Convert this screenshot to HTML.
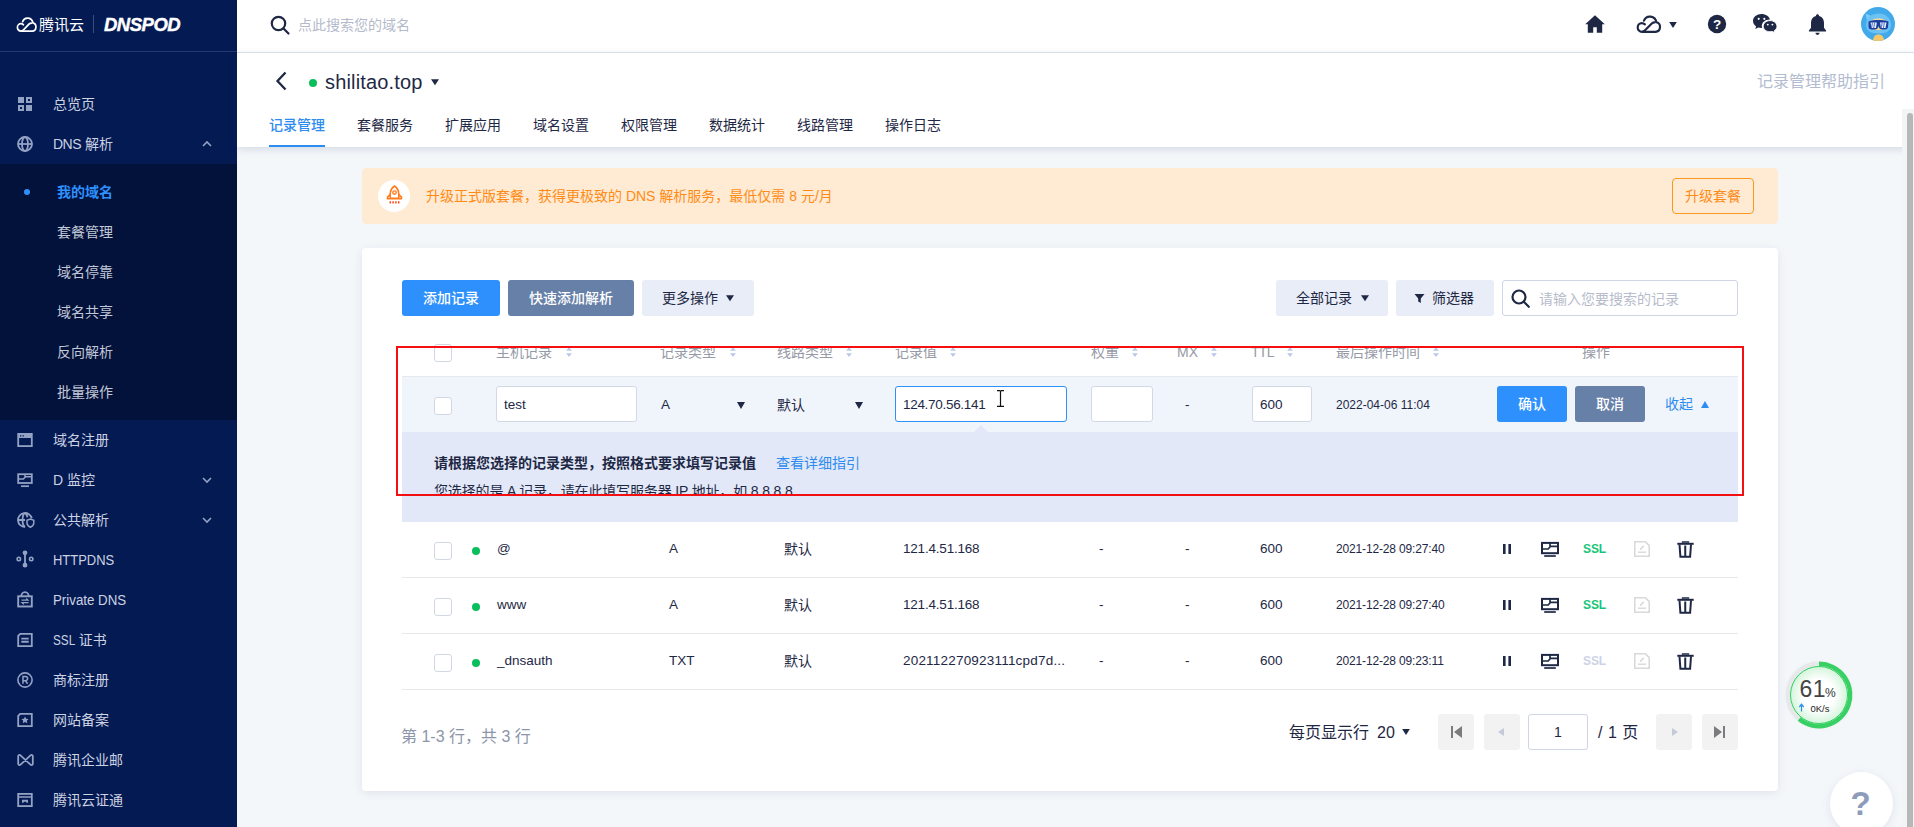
<!DOCTYPE html>
<html lang="zh-CN">
<head>
<meta charset="utf-8">
<title>DNSPod - shilitao.top 记录管理</title>
<style>
*{box-sizing:border-box;margin:0;padding:0}
html,body{width:1914px;height:827px;overflow:hidden}
body{position:relative;font-family:"Liberation Sans","Noto Sans CJK SC",sans-serif;font-size:14px;color:#1e2845;background:#f4f7fa}
.abs{position:absolute}
svg{display:block}
/* ---------- sidebar ---------- */
#side{position:absolute;left:0;top:0;width:237px;height:827px;background:#031a53;color:#c9cfe0}
#logo{position:absolute;left:0;top:0;width:237px;height:52px;border-bottom:1px solid #253a6e}
.mi{position:absolute;left:0;width:237px;height:40px;line-height:40px;padding-left:53px;font-size:14px;color:#cdd2e2;white-space:nowrap}
.mi svg{position:absolute;left:17px;top:12px}
.mi .chev{left:201px;top:14px}
#sub{position:absolute;left:0;top:164px;width:237px;height:256px;background:#02123b}
.si{position:absolute;left:57px;height:40px;line-height:40px;font-size:14px;color:#c3c8d8;white-space:nowrap}
/* ---------- topbar ---------- */
#top{position:absolute;left:237px;top:0;width:1677px;height:53px;background:#fff;border-bottom:1px solid #e1e4ed}
#head{position:absolute;left:237px;top:53px;width:1677px;height:94px;background:#fff;box-shadow:0 2px 8px rgba(40,60,110,.16)}
.tab{position:absolute;top:62px;height:20px;line-height:20px;font-size:14px;color:#1e2845;white-space:nowrap}
/* ---------- content ---------- */
#banner{position:absolute;left:362px;top:168px;width:1416px;height:56px;background:#ffebd4;border-radius:4px}
#card{position:absolute;left:362px;top:248px;width:1416px;height:543px;background:#fff;border-radius:4px;box-shadow:0 2px 10px rgba(40,60,110,.10)}
.btn{position:absolute;top:280px;height:36px;line-height:36px;border-radius:3px;font-size:14px;text-align:center;white-space:nowrap}
.th{position:absolute;top:342px;height:20px;line-height:20px;font-size:14px;color:#969aa6;white-space:nowrap}
.cb{position:absolute;width:18px;height:18px;border:1px solid #d3d7e3;border-radius:3px;background:#fff}
.inp{position:absolute;top:386px;height:36px;line-height:36px;border:1px solid #d3d8e6;border-radius:3px;background:#fff;font-size:13.500px;color:#1e2845;padding-left:7px}
.sx{display:inline-block;transform-origin:0 50%}
.td{position:absolute;height:20px;line-height:20px;font-size:13.500px;color:#1e2845;white-space:nowrap}
.row{position:absolute;left:402px;width:1336px;height:56px;border-bottom:1px solid #e4e7ef}
.pg{position:absolute;top:714px;width:36px;height:36px;background:#f2f2f3;border-radius:3px}
</style>
</head>
<body>
<!-- SIDEBAR -->
<div id="side">
  <div id="logo">
    <svg class="abs" style="left:16px;top:15px" width="22" height="18" preserveAspectRatio="none" viewBox="0 0 22 17" fill="none" stroke="#fff" stroke-width="1.700" stroke-linecap="round" stroke-linejoin="round"><path d="M5.600 15.200h10.600a3.900 3.900 0 0 0 .700-7.700A5.400 5.400 0 0 0 6.600 6.200"/><path d="M15.500 7.600c-.900 0-1.700.300-2.400.900L7.500 14c-.700.700-1.400 1.200-2.600 1.200a3.500 3.500 0 0 1 0-7c1 0 1.800.400 2.500 1"/></svg>
    <div class="abs" style="left:39px;top:13px;height:24px;line-height:24px;font-size:15px;color:#fff;letter-spacing:0">腾讯云</div>
    <div class="abs" style="left:93px;top:15px;width:1px;height:18px;background:#3c4d7c"></div>
    <div class="abs" style="left:104px;top:13px;height:24px;line-height:24px;font-size:18.500px;font-weight:bold;font-style:italic;color:#fff;letter-spacing:-.500px;-webkit-text-stroke:.400px #fff">DNSPOD</div>
  </div>
  <div class="mi" style="top:84px"><svg width="16" height="16" viewBox="0 0 16 16"><path fill="#94a2c4" d="M1 1h6v6H1zM9 1h6v6H9zm2 2v2h2V3zM1 9h6v6H1zm2 2v2h2v-2zM9 9h6v6H9z" fill-rule="evenodd"/></svg>总览页</div>
  <div class="mi" style="top:124px"><svg width="16" height="16" viewBox="0 0 16 16" fill="none" stroke="#94a2c4" stroke-width="1.800"><circle cx="8" cy="8" r="7"/><ellipse cx="8" cy="8" rx="3" ry="7"/><path d="M1 8h14"/></svg><span style="letter-spacing:-.500px">DNS</span> 解析<svg class="chev" width="12" height="12" viewBox="0 0 12 12" fill="none" stroke="#94a2c4" stroke-width="1.6"><path d="M2 8l4-4 4 4"/></svg></div>
  <div id="sub">
    <div class="abs" style="left:24px;top:25px;width:6px;height:6px;border-radius:50%;background:#2e90fd"></div>
    <div class="si" style="top:8px;color:#2e90fd;font-weight:bold">我的域名</div>
    <div class="si" style="top:48px">套餐管理</div>
    <div class="si" style="top:88px">域名停靠</div>
    <div class="si" style="top:128px">域名共享</div>
    <div class="si" style="top:168px">反向解析</div>
    <div class="si" style="top:208px">批量操作</div>
  </div>
  <div class="mi" style="top:420px"><svg width="16" height="16" viewBox="0 0 16 16" fill="none" stroke="#94a2c4" stroke-width="1.800"><rect x="1.200" y="1.900" width="13.600" height="12.200"/><path d="M1.200 4h13.600" stroke-width="4"/><path d="M3 3.200h1.300v1.300H3zM5.600 3.200h1.300v1.300H5.600z" fill="#031a53" stroke="none"/></svg>域名注册</div>
  <div class="mi" style="top:460px"><svg style="top:13px" width="16" height="16" viewBox="0 0 16 16" fill="none" stroke="#94a2c4" stroke-width="1.800"><rect x="1.200" y="1.200" width="13.600" height="8.800"/><path d="M1.200 6h5.200l2-2.300h6.400M8 1.200v3.500" stroke-width="1.500"/><path d="M4 13.200h8" stroke-width="1.700"/></svg>D 监控<svg class="chev" width="12" height="12" viewBox="0 0 12 12" fill="none" stroke="#94a2c4" stroke-width="1.6"><path d="M2 4l4 4 4-4"/></svg></div>
  <div class="mi" style="top:500px"><svg width="18" height="17" viewBox="0 0 18 17" fill="none" stroke="#94a2c4" stroke-width="1.800"><path d="M8 15A7 7 0 1 1 14.800 6.300M8 1C4.700 3 4.700 13 8 15M1 8h7M8 1c1.300.9 2.100 2.600 2.500 4.300"/><path d="M10 8.300l3.400-1.300 3.400 1.300v2.800c0 1.900-1.400 3.300-3.400 4.100-2-.8-3.400-2.200-3.400-4.100z" stroke-width="1.500"/></svg>公共解析<svg class="chev" width="12" height="12" viewBox="0 0 12 12" fill="none" stroke="#94a2c4" stroke-width="1.6"><path d="M2 4l4 4 4-4"/></svg></div>
  <div class="mi" style="top:540px"><svg style="left:16px;top:10px" width="18" height="18" viewBox="0 0 18 18" fill="none" stroke="#94a2c4" stroke-width="1.600"><path d="M9 3v12" stroke-width="1.800"/><circle cx="9" cy="2.800" r="1.600" fill="#94a2c4"/><circle cx="9" cy="15.200" r="1.600" fill="#94a2c4"/><circle cx="2.800" cy="9" r="1.700"/><circle cx="15.200" cy="9" r="1.700"/></svg><span class="sx" style="transform:scaleX(.925)">HTTPDNS</span></div>
  <div class="mi" style="top:580px"><svg style="top:10px" width="16" height="18" viewBox="0 0 16 18" fill="none" stroke="#94a2c4" stroke-width="1.900"><rect x="1.200" y="6.300" width="13.600" height="10.200"/><path d="M4.300 6.300a3.700 4.200 0 0 1 7.400 0"/><path d="M4.500 10.200h6.500l-1.800-1.700M11.500 12.700H5l1.800 1.700" stroke-width="1.200"/></svg><span class="sx" style="transform:scaleX(.950)">Private DNS</span></div>
  <div class="mi" style="top:620px"><svg width="16" height="16" viewBox="0 0 16 16" fill="none" stroke="#94a2c4" stroke-width="1.800"><path d="M3.200 1.900h11.600v12.200H1.200V3.900z"/><path d="M4.300 6.600h7.400M4.300 9.800h7.400" stroke-width="1.900"/></svg><span class="sx" style="transform:scaleX(.840);margin-right:-4.500px">SSL</span> 证书</div>
  <div class="mi" style="top:660px"><svg width="16" height="16" viewBox="0 0 16 16" fill="none" stroke="#94a2c4" stroke-width="1.600"><circle cx="8" cy="8" r="7.100"/><path d="M6 11.700V4.500h2.500a2.100 2.100 0 0 1 0 4.200H6M8.500 8.700l2.100 3" stroke-width="1.500"/></svg>商标注册</div>
  <div class="mi" style="top:700px"><svg width="16" height="16" viewBox="0 0 16 16" fill="none" stroke="#94a2c4" stroke-width="1.800"><path d="M3.200 1.900h11.600v12.200H1.200V3.900z"/><path d="M8 4.400l1.100 2.300 2.500.3-1.800 1.700.5 2.500L8 10l-2.300 1.200.5-2.500-1.800-1.700 2.500-.3z" fill="#94a2c4" stroke="none"/></svg>网站备案</div>
  <div class="mi" style="top:740px"><svg width="17" height="16" viewBox="0 0 17 16" fill="none" stroke="#94a2c4" stroke-width="1.800" stroke-linejoin="round"><path d="M1.200 4.300c0-1.300 1.300-1.900 2.300-1l10 9.400c1 .9 2.300.3 2.300-1V4.300c0-1.300-1.300-1.900-2.300-1l-10 9.400c-1 .9-2.300.3-2.300-1z"/></svg>腾讯企业邮</div>
  <div class="mi" style="top:780px"><svg width="16" height="16" viewBox="0 0 16 16" fill="none" stroke="#94a2c4" stroke-width="1.800"><rect x="1.200" y="1.900" width="13.600" height="12.200"/><path d="M1.200 5h13.600" stroke-width="1.500"/><path d="M5 7.800h6v3H9.300V9.700H6.700v1.100H5z" fill="#94a2c4" stroke="none"/></svg>腾讯云证通</div>
</div>
<!-- TOPBAR -->
<div id="top">
  <svg class="abs" style="left:32px;top:14px" width="22" height="22" viewBox="0 0 22 22" fill="none" stroke="#1e2845" stroke-width="2.2"><circle cx="9.500" cy="9.500" r="6.700"/><path d="M14.500 14.500l5 5" stroke-linecap="round"/></svg>
  <div class="abs" style="left:61px;top:14px;height:22px;line-height:22px;font-size:14px;color:#b4bacb;white-space:nowrap">点此搜索您的域名</div>
  <!-- home -->
  <svg class="abs" style="left:1347px;top:13px" width="22" height="22" viewBox="0 0 22 22"><path fill="#1e2845" d="M11 2.200 1.200 11.300h2.600v8.500h5.400v-5.600h3.600v5.600h5.400v-8.500h2.600z"/></svg>
  <!-- cloud -->
  <svg class="abs" style="left:1398.500px;top:12.500px" width="26.500" height="21" preserveAspectRatio="none" viewBox="0 0 22 17" fill="none" stroke="#1e2845" stroke-width="1.800" stroke-linecap="round" stroke-linejoin="round"><path d="M5.600 15.200h10.600a3.900 3.900 0 0 0 .700-7.700A5.400 5.400 0 0 0 6.600 6.200"/><path d="M15.500 7.600c-.900 0-1.700.300-2.400.900L7.500 14c-.700.700-1.400 1.200-2.600 1.200a3.500 3.500 0 0 1 0-7c1 0 1.800.400 2.500 1"/></svg>
  <svg class="abs" style="left:1432px;top:22px" width="8" height="6" viewBox="0 0 9 7"><path fill="#1e2845" d="M0 0h9L4.500 7z"/></svg>
  <!-- help -->
  <svg class="abs" style="left:1470px;top:14px" width="20" height="20" viewBox="0 0 20 20"><circle cx="10" cy="10" r="9.200" fill="#1e2845"/><text x="10" y="14.800" font-family="Liberation Sans,sans-serif" font-size="13.500" font-weight="bold" fill="#fff" text-anchor="middle">?</text></svg>
  <!-- wechat -->
  <svg class="abs" style="left:1515px;top:13px" width="26" height="22" viewBox="0 0 26 22"><path fill="#1e2845" d="M9.500 1C4.800 1 1 4.100 1 8c0 2.200 1.200 4.100 3.100 5.400L3.300 16l3-1.600c1 .3 2 .5 3.200.5h.6A6.300 6.300 0 0 1 9.800 13c0-3.600 3.500-6.500 7.800-6.500h.300C17.100 3.300 13.600 1 9.500 1z"/><path fill="#1e2845" d="M25 13.200c0-3.100-3.100-5.600-6.900-5.600s-6.900 2.500-6.900 5.600 3.100 5.600 6.900 5.600c.8 0 1.600-.1 2.400-.3l2.500 1.400-.7-2.200c1.700-1 2.700-2.700 2.700-4.500z" stroke="#fff" stroke-width="1"/><circle cx="6.700" cy="5.800" r="1.100" fill="#fff"/><circle cx="12.300" cy="5.800" r="1.100" fill="#fff"/><circle cx="15.800" cy="11.600" r=".95" fill="#fff"/><circle cx="20.400" cy="11.600" r=".95" fill="#fff"/></svg>
  <!-- bell -->
  <svg class="abs" style="left:1569.500px;top:12.500px" width="21" height="23" viewBox="0 0 20 22"><path fill="#1e2845" d="M10 1.200c.8 0 1.400.6 1.400 1.300v.4c2.900.7 4.800 3.100 4.800 6.200v5l2 2.600v.9H1.800v-.9l2-2.600v-5c0-3.100 1.900-5.500 4.800-6.200v-.4c0-.7.600-1.300 1.400-1.300zM8 19h4a2 2 0 0 1-4 0z"/></svg>
  <!-- avatar -->
  <svg class="abs" style="left:1624px;top:7px" width="34" height="34" viewBox="0 0 34 34"><defs><clipPath id="avc"><circle cx="17" cy="17" r="17"/></clipPath></defs><circle cx="17" cy="17" r="17" fill="#42a9ea"/><g clip-path="url(#avc)"><path d="M4.500 6.500l5.500 2.500-4 4.500z" fill="#7cccf5"/><path d="M5 18c0-7 5.500-11.500 12.500-11.500S30 11 30 18c0 5-4 8.500-12.500 8.500S5 23 5 18z" fill="#6cc3f3"/><path d="M9 17c0-3.500 3.500-5.500 8.500-5.500s8.500 2 8.500 5.500c0 4-3 6-8.500 6S9 21 9 17z" fill="#f7d896"/><path d="M7.500 14.500c3-1.200 7-1.500 10-1.500s7 .300 10 1.500l-.500 5.500c-.300 1.800-1.500 2.500-3.500 2.500h-2.500c-1.500 0-2.500-.700-3-2l-.500-1.500-.500 1.500c-.500 1.300-1.500 2-3 2H11c-2 0-3.200-.700-3.500-2.500z" fill="#1b3f9e"/><path d="M9.500 15.500h6.300l-.800 5.500h-4.500z M19 15.500h6.500l-1 5.500H20z" fill="#e9f2fc"/><path d="M11.500 15.500l-1 5.500M13.700 15.500l-1 5.500M21.200 15.500l-1 5.500M23.400 15.500l-1 5.500" stroke="#5f78c4" stroke-width="1.100"/><path d="M12 34c0-4 2-6.500 5.500-6.500S23 30 23 34z" fill="#f6c768"/></g></svg>
</div>
<div id="head">
  <svg class="abs" style="left:38px;top:18px" width="12" height="20" viewBox="0 0 12 20" fill="none" stroke="#1e2845" stroke-width="2.300"><path d="M10.500 1.500 2.500 10l8 8.500"/></svg>
  <div class="abs" style="left:72px;top:26px;width:8px;height:8px;border-radius:50%;background:#0abf5b"></div>
  <div class="abs" style="left:88px;top:15px;height:28px;line-height:28px;font-size:20px;color:#1e2845;white-space:nowrap;letter-spacing:.170px">shilitao.top</div>
  <svg class="abs" style="left:194px;top:26px" width="8" height="6.500" viewBox="0 0 9 7"><path fill="#1e2845" d="M0 0h9L4.500 7z"/></svg>
  <div class="abs" style="right:29px;top:18px;height:22px;line-height:22px;font-size:16px;color:#b3bccf;white-space:nowrap">记录管理帮助指引</div>
  <div class="tab" style="left:32px;color:#2e8cf0;font-weight:500">记录管理</div>
  <div class="abs" style="left:32px;top:92px;width:56px;height:2px;background:#2e8cf0"></div>
  <div class="tab" style="left:120px">套餐服务</div>
  <div class="tab" style="left:208px">扩展应用</div>
  <div class="tab" style="left:296px">域名设置</div>
  <div class="tab" style="left:384px">权限管理</div>
  <div class="tab" style="left:472px">数据统计</div>
  <div class="tab" style="left:560px">线路管理</div>
  <div class="tab" style="left:648px">操作日志</div>
</div>
<div class="abs" style="left:1902px;top:109px;width:12px;height:718px;background:#f3f4f6"></div>
<div class="abs" style="left:1907px;top:113px;width:5.500px;height:730px;background:#b7b7b7;border-radius:3px"></div>
<!-- CONTENT -->
<div id="banner">
  <div class="abs" style="left:16px;top:12px;width:32px;height:32px;border-radius:50%;background:#fff"></div>
  <svg class="abs" style="left:24px;top:17px" width="17" height="20" viewBox="0 0 17 20" fill="none" stroke="#ff7a1a" stroke-width="1.600" stroke-linejoin="round"><path d="M8.500 1C5.800 3 4.200 5.800 4.200 9v4.200h8.600V9c0-3.200-1.600-6-4.300-8z"/><circle cx="8.500" cy="7.600" r="1.700" stroke-width="1.400"/><path d="M4.200 9.600 1.500 12.200v1.600h14v-1.600L12.800 9.600"/><path d="M4.300 16.200v2.400M7.100 16.200v2.400M9.900 16.200v2.400M12.700 16.200v2.400" stroke="#ff4a1c" stroke-width="1.500"/></svg>
  <div class="abs" style="left:64px;top:17px;height:22px;line-height:22px;font-size:14px;color:#ff8a15;white-space:nowrap">升级正式版套餐，获得更极致的 DNS 解析服务，最低仅需 8 元/月</div>
  <div class="abs" style="left:1310px;top:10px;width:82px;height:36px;line-height:34px;border:1px solid #fb971f;border-radius:4px;text-align:center;font-size:14px;color:#fb8c18">升级套餐</div>
</div>
<div id="card"></div>
<div class="btn" style="left:402px;width:98px;background:#2e90fd;color:#fff;font-weight:500">添加记录</div>
<div class="btn" style="left:508px;width:126px;background:#6780a8;color:#fff;font-weight:500">快速添加解析</div>
<div class="btn" style="left:642px;width:112px;background:#e8edf7;color:#1e2845;text-align:left;padding-left:20px">更多操作<svg class="abs" style="left:84px;top:15px" width="8" height="6.500" viewBox="0 0 9 7"><path fill="#1e2845" d="M0 0h9L4.500 7z"/></svg></div>
<div class="btn" style="left:1276px;width:112px;background:#e8edf7;color:#1e2845;text-align:left;padding-left:20px">全部记录<svg class="abs" style="left:85px;top:15px" width="8" height="6.500" viewBox="0 0 9 7"><path fill="#1e2845" d="M0 0h9L4.500 7z"/></svg></div>
<div class="btn" style="left:1396px;width:98px;background:#e8edf7;color:#1e2845;text-align:left;padding-left:36px"><svg class="abs" style="left:18px;top:13px" width="11" height="11" viewBox="0 0 11 11"><path fill="#1e2845" d="M.500 1h10L6.800 5.400V10L4.200 8.600V5.400z"/></svg>筛选器</div>
<div class="abs" style="left:1502px;top:280px;width:236px;height:36px;border:1px solid #cfd5e4;border-radius:3px;background:#fff">
  <svg class="abs" style="left:7px;top:7px" width="21" height="21" viewBox="0 0 21 21" fill="none" stroke="#1e2845" stroke-width="2.200"><circle cx="9" cy="9" r="6.500"/><path d="M13.800 13.800l5 5" stroke-linecap="round"/></svg>
  <div class="abs" style="left:36px;top:7px;height:22px;line-height:22px;font-size:14px;color:#b7bccb;white-space:nowrap">请输入您要搜索的记录</div>
</div>
<!-- header row (clipped at red line) -->
<div class="cb" style="left:434px;top:344px"></div>
<div class="abs" id="thclip" style="left:402px;top:348px;width:1336px;height:28px;overflow:hidden">
  <div class="abs" style="left:-402px;top:-348px;width:1914px;height:400px">
    <div class="th" style="left:496px">主机记录</div><svg class="abs srt" style="margin-left:1px;left:565px;top:347px" width="6" height="10" viewBox="0 0 7 12"><path fill="#bcc7ea" d="M3.500 0 7 4.500H0zM3.500 12 0 7.500h7z"/></svg>
    <div class="th" style="left:660px">记录类型</div><svg class="abs srt" style="margin-left:1px;left:729px;top:347px" width="6" height="10" viewBox="0 0 7 12"><path fill="#bcc7ea" d="M3.500 0 7 4.500H0zM3.500 12 0 7.500h7z"/></svg>
    <div class="th" style="left:777px">线路类型</div><svg class="abs srt" style="margin-left:1px;left:845px;top:347px" width="6" height="10" viewBox="0 0 7 12"><path fill="#bcc7ea" d="M3.500 0 7 4.500H0zM3.500 12 0 7.500h7z"/></svg>
    <div class="th" style="left:895px">记录值</div><svg class="abs srt" style="margin-left:1px;left:949px;top:347px" width="6" height="10" viewBox="0 0 7 12"><path fill="#bcc7ea" d="M3.500 0 7 4.500H0zM3.500 12 0 7.500h7z"/></svg>
    <div class="th" style="left:1091px">权重</div><svg class="abs srt" style="margin-left:1px;left:1131px;top:347px" width="6" height="10" viewBox="0 0 7 12"><path fill="#bcc7ea" d="M3.500 0 7 4.500H0zM3.500 12 0 7.500h7z"/></svg>
    <div class="th" style="left:1177px">MX</div><svg class="abs srt" style="margin-left:1px;left:1210px;top:347px" width="6" height="10" viewBox="0 0 7 12"><path fill="#bcc7ea" d="M3.500 0 7 4.500H0zM3.500 12 0 7.500h7z"/></svg>
    <div class="th" style="left:1251px;letter-spacing:-.700px">TTL</div><svg class="abs srt" style="margin-left:1px;left:1286px;top:347px" width="6" height="10" viewBox="0 0 7 12"><path fill="#bcc7ea" d="M3.500 0 7 4.500H0zM3.500 12 0 7.500h7z"/></svg>
    <div class="th" style="left:1336px">最后操作时间</div><svg class="abs srt" style="margin-left:1px;left:1432px;top:347px" width="6" height="10" viewBox="0 0 7 12"><path fill="#bcc7ea" d="M3.500 0 7 4.500H0zM3.500 12 0 7.500h7z"/></svg>
    <div class="th" style="left:1582px">操作</div>
  </div>
</div>
<div class="abs" style="left:402px;top:376px;width:1336px;height:1px;background:#e6e8ec"></div>
<!-- edit row -->
<div class="abs" style="left:402px;top:377px;width:1336px;height:55px;background:#f0f4fb"></div>
<div class="abs" style="left:402px;top:432px;width:1336px;height:90px;background:#e2e8f7"></div>
<div class="abs" style="left:974px;top:425px;width:0;height:0;border-left:7px solid transparent;border-right:7px solid transparent;border-bottom:7px solid #e2e8f7"></div>
<div class="cb" style="left:434px;top:397px"></div>
<div class="inp" style="left:496px;width:141px">test</div>
<div class="td" style="left:661px;top:395px">A</div><svg class="abs" style="left:737px;top:402px" width="8" height="7" viewBox="0 0 8 7"><path fill="#1e2845" d="M0 0h8L4 7z"/></svg>
<div class="td" style="left:777px;top:395px;font-size:14px">默认</div><svg class="abs" style="left:855px;top:402px" width="8" height="7" viewBox="0 0 8 7"><path fill="#1e2845" d="M0 0h8L4 7z"/></svg>
<div class="inp" style="left:895px;width:172px;border-color:#2e90fd;padding-left:7px;letter-spacing:-.300px">124.70.56.141</div>
<div class="inp" style="left:1091px;width:62px"></div>
<div class="td" style="left:1185px;top:395px">-</div>
<div class="inp" style="left:1252px;width:60px">600</div>
<div class="td" style="left:1336px;top:395px;font-size:12px">2022-04-06 11:04</div>
<div class="btn" style="left:1497px;top:386px;width:70px;background:#2e90fd;color:#fff;font-weight:500">确认</div>
<div class="btn" style="left:1575px;top:386px;width:70px;background:#6780a8;color:#fff;font-weight:500">取消</div>
<div class="td" style="left:1665px;top:394px;font-size:14px;color:#2e8cf0">收起</div><svg class="abs" style="left:1701px;top:401px" width="8" height="7" viewBox="0 0 8 7"><path fill="#2e8cf0" d="M0 7h8L4 0z"/></svg>
<!-- help panel text (clipped at red line) -->
<div class="abs" style="left:402px;top:432px;width:1336px;height:62px;overflow:hidden">
  <div class="abs" style="left:32px;top:20px;height:22px;line-height:22px;font-size:14px;font-weight:bold;color:#1e2845;white-space:nowrap">请根据您选择的记录类型，按照格式要求填写记录值</div>
  <div class="abs" style="left:374px;top:20px;height:22px;line-height:22px;font-size:14px;color:#2e8cf0;white-space:nowrap">查看详细指引</div>
  <div class="abs" style="left:32px;top:48px;height:22px;line-height:22px;font-size:14px;color:#1e2845;white-space:nowrap;letter-spacing:-.150px">您选择的是 A 记录，请在此填写服务器 IP 地址，如 8.8.8.8</div>
</div>
<!-- I-beam cursor -->
<svg class="abs" style="left:996px;top:390px" width="9" height="17" viewBox="0 0 9 17" fill="none" stroke="#111" stroke-width="1.200"><path d="M1 .600h2.500c.6 0 1 .400 1 1v13.800c0 .600-.400 1-1 1H1M8 .600H5.500c-.600 0-1 .400-1 1M8 16.400H5.500c-.600 0-1-.400-1-1"/></svg>
<!-- red annotation -->
<div class="abs" style="left:396px;top:346px;width:1348px;height:150px;border:2px solid #f40f12"></div>
<!--ROWS-->
<div class="abs" style="left:402px;top:577px;width:1336px;height:1px;background:#e6e8ec"></div>
<div class="cb" style="left:434px;top:542px"></div>
<div class="abs" style="left:472px;top:547px;width:8px;height:8px;border-radius:50%;background:#0abf5b"></div>
<div class="td" style="left:497px;top:539px">@</div>
<div class="td" style="left:669px;top:539px">A</div>
<div class="td" style="left:784px;top:539px;font-size:14px">默认</div>
<div class="td" style="left:903px;top:539px;letter-spacing:-0.2px">121.4.51.168</div>
<div class="td" style="left:1099px;top:539px">-</div>
<div class="td" style="left:1185px;top:539px">-</div>
<div class="td" style="left:1260px;top:539px">600</div>
<div class="td" style="left:1336px;top:539px;font-size:12px;letter-spacing:-.150px">2021-12-28 09:27:40</div>
<svg class="abs" style="left:1503px;top:544px" width="8" height="10" viewBox="0 0 8 10"><path fill="#1e2845" d="M0 0h2.600v10H0zM5.400 0H8v10H5.400z"/></svg>
<svg class="abs" style="left:1540px;top:541px" width="20" height="17" viewBox="0 0 20 17" fill="none" stroke="#1e2845" stroke-width="2"><rect x="2" y="1.900" width="16" height="10.300"/><path d="M2 8h6.200l2.400-2.700H18M10 2v4.200" stroke-width="1.700"/><path d="M4.200 15h11.600" stroke-width="1.700"/></svg>
<div class="td" style="left:1583px;top:539px;font-size:12px;font-weight:bold;color:#17c577;letter-spacing:-.100px">SSL</div>
<svg class="abs" style="left:1634px;top:541px" width="16" height="16" viewBox="0 0 16 16" fill="none" stroke="#d9d9dc" stroke-width="1.700"><path d="M.700 .700h10.600l4 4v10.600H.700z"/><path d="M6.300 8.600l3.400-3.800" stroke-width="1.700"/><path d="M4 11.200h8" stroke-width="1.400"/></svg>
<svg class="abs" style="left:1677px;top:541px" width="17" height="17" viewBox="0 0 17 17" fill="none" stroke="#1e2845" stroke-width="2"><path d="M.300 2.800h16.400"/><path d="M4.800 1h7.400" stroke-width="1.500"/><path d="M2.500 3.500l.900 12.300h9.700l.900-12.300M8.250 4.500v11"/></svg>
<div class="abs" style="left:402px;top:633px;width:1336px;height:1px;background:#e6e8ec"></div>
<div class="cb" style="left:434px;top:598px"></div>
<div class="abs" style="left:472px;top:603px;width:8px;height:8px;border-radius:50%;background:#0abf5b"></div>
<div class="td" style="left:497px;top:595px">www</div>
<div class="td" style="left:669px;top:595px">A</div>
<div class="td" style="left:784px;top:595px;font-size:14px">默认</div>
<div class="td" style="left:903px;top:595px;letter-spacing:-0.2px">121.4.51.168</div>
<div class="td" style="left:1099px;top:595px">-</div>
<div class="td" style="left:1185px;top:595px">-</div>
<div class="td" style="left:1260px;top:595px">600</div>
<div class="td" style="left:1336px;top:595px;font-size:12px;letter-spacing:-.150px">2021-12-28 09:27:40</div>
<svg class="abs" style="left:1503px;top:600px" width="8" height="10" viewBox="0 0 8 10"><path fill="#1e2845" d="M0 0h2.600v10H0zM5.400 0H8v10H5.400z"/></svg>
<svg class="abs" style="left:1540px;top:597px" width="20" height="17" viewBox="0 0 20 17" fill="none" stroke="#1e2845" stroke-width="2"><rect x="2" y="1.900" width="16" height="10.300"/><path d="M2 8h6.200l2.400-2.700H18M10 2v4.200" stroke-width="1.700"/><path d="M4.200 15h11.600" stroke-width="1.700"/></svg>
<div class="td" style="left:1583px;top:595px;font-size:12px;font-weight:bold;color:#17c577;letter-spacing:-.100px">SSL</div>
<svg class="abs" style="left:1634px;top:597px" width="16" height="16" viewBox="0 0 16 16" fill="none" stroke="#d9d9dc" stroke-width="1.700"><path d="M.700 .700h10.600l4 4v10.600H.700z"/><path d="M6.300 8.600l3.400-3.800" stroke-width="1.700"/><path d="M4 11.200h8" stroke-width="1.400"/></svg>
<svg class="abs" style="left:1677px;top:597px" width="17" height="17" viewBox="0 0 17 17" fill="none" stroke="#1e2845" stroke-width="2"><path d="M.300 2.800h16.400"/><path d="M4.800 1h7.400" stroke-width="1.500"/><path d="M2.500 3.500l.900 12.300h9.700l.900-12.300M8.250 4.500v11"/></svg>
<div class="abs" style="left:402px;top:689px;width:1336px;height:1px;background:#e6e8ec"></div>
<div class="cb" style="left:434px;top:654px"></div>
<div class="abs" style="left:472px;top:659px;width:8px;height:8px;border-radius:50%;background:#0abf5b"></div>
<div class="td" style="left:497px;top:651px">_dnsauth</div>
<div class="td" style="left:669px;top:651px">TXT</div>
<div class="td" style="left:784px;top:651px;font-size:14px">默认</div>
<div class="td" style="left:903px;top:651px;letter-spacing:0.2px">202112270923111cpd7d...</div>
<div class="td" style="left:1099px;top:651px">-</div>
<div class="td" style="left:1185px;top:651px">-</div>
<div class="td" style="left:1260px;top:651px">600</div>
<div class="td" style="left:1336px;top:651px;font-size:12px;letter-spacing:-.150px">2021-12-28 09:23:11</div>
<svg class="abs" style="left:1503px;top:656px" width="8" height="10" viewBox="0 0 8 10"><path fill="#1e2845" d="M0 0h2.600v10H0zM5.400 0H8v10H5.400z"/></svg>
<svg class="abs" style="left:1540px;top:653px" width="20" height="17" viewBox="0 0 20 17" fill="none" stroke="#1e2845" stroke-width="2"><rect x="2" y="1.900" width="16" height="10.300"/><path d="M2 8h6.200l2.400-2.700H18M10 2v4.200" stroke-width="1.700"/><path d="M4.200 15h11.600" stroke-width="1.700"/></svg>
<div class="td" style="left:1583px;top:651px;font-size:12px;font-weight:bold;color:#ccd3e6;letter-spacing:-.100px">SSL</div>
<svg class="abs" style="left:1634px;top:653px" width="16" height="16" viewBox="0 0 16 16" fill="none" stroke="#d9d9dc" stroke-width="1.700"><path d="M.700 .700h10.600l4 4v10.600H.700z"/><path d="M6.300 8.600l3.400-3.800" stroke-width="1.700"/><path d="M4 11.200h8" stroke-width="1.400"/></svg>
<svg class="abs" style="left:1677px;top:653px" width="17" height="17" viewBox="0 0 17 17" fill="none" stroke="#1e2845" stroke-width="2"><path d="M.300 2.800h16.400"/><path d="M4.800 1h7.400" stroke-width="1.500"/><path d="M2.500 3.500l.900 12.300h9.700l.900-12.300M8.250 4.500v11"/></svg>
<!--/ROWS-->
<div class="abs" style="left:401px;top:725px;height:24px;line-height:24px;font-size:16px;color:#8c95aa;white-space:nowrap">第 1-3 行，共 3 行</div>
<div class="abs" style="left:1289px;top:721px;height:24px;line-height:24px;font-size:16px;color:#1e2845;white-space:nowrap">每页显示行</div>
<div class="abs" style="left:1377px;top:721px;height:24px;line-height:24px;font-size:16px;color:#1e2845;white-space:nowrap">20</div>
<svg class="abs" style="left:1402px;top:729px" width="8" height="6" viewBox="0 0 9 7"><path fill="#1e2845" d="M0 0h9L4.500 7z"/></svg>
<div class="pg" style="left:1438px"><svg class="abs" style="left:13px;top:12px" width="11" height="12" viewBox="0 0 11 12"><path fill="#7b7b7e" d="M0 0h2v12H0zM11 0v12L3 6z"/></svg></div>
<div class="pg" style="left:1484px"><svg class="abs" style="left:14px;top:14px" width="6" height="8" viewBox="0 0 6 8"><path fill="#c5cad8" d="M6 0v8L0 4z"/></svg></div>
<div class="abs" style="left:1528px;top:714px;width:60px;height:36px;line-height:34px;border:1px solid #cfd5e4;border-radius:3px;background:#fff;text-align:center;font-size:14px;color:#1e2845">1</div>
<div class="abs" style="left:1598px;top:721px;height:24px;line-height:24px;font-size:16px;color:#1e2845;white-space:nowrap;word-spacing:1px">/ 1 页</div>
<div class="pg" style="left:1656px"><svg class="abs" style="left:16px;top:14px" width="6" height="8" viewBox="0 0 6 8"><path fill="#c5cad8" d="M0 0v8l6-4z"/></svg></div>
<div class="pg" style="left:1702px"><svg class="abs" style="left:12px;top:12px" width="11" height="12" viewBox="0 0 11 12"><path fill="#7b7b7e" d="M9 0h2v12H9zM0 0v12l8-6z"/></svg></div>
<!-- floating widgets -->
<svg class="abs" style="left:1784px;top:659.500px" width="70" height="70" viewBox="0 0 70 70"><defs><radialGradient id="gg" cx="50%" cy="50%" r="50%"><stop offset="0.550" stop-color="#fff"/><stop offset="1" stop-color="#d4f5dc"/></radialGradient></defs><circle cx="35" cy="35" r="35" fill="#eef1f5" opacity=".6"/><circle cx="35" cy="35" r="31.200" fill="none" stroke="#e6e8ea" stroke-width="4.400"/><path d="M35 3.80A31.2 31.2 0 1 1 15.11 59.04" fill="none" stroke="#36d162" stroke-width="4.400"/><circle cx="35" cy="35" r="28.500" fill="url(#gg)" stroke="#2fd05f" stroke-width="1"/><text x="15.500" y="36.500" font-family="Liberation Sans,sans-serif" font-size="23" fill="#444" letter-spacing=".5">61</text><text x="41" y="36.500" font-family="Liberation Sans,sans-serif" font-size="12" fill="#333">%</text><path d="M17.500 51.500v-7M15.300 47l2.200-2.700 2.200 2.700" stroke="#2b8fe8" stroke-width="1.200" fill="none"/><text x="26.500" y="52" font-family="Liberation Sans,sans-serif" font-size="9.500" fill="#222">0K/s</text></svg>
<div class="abs" style="left:1830px;top:772px;width:63px;height:63px;border-radius:50%;background:#fff;box-shadow:0 2px 10px rgba(40,60,110,.10)"></div>
<div class="abs" style="left:1829px;top:784px;width:63px;height:40px;line-height:40px;text-align:center;font-size:33px;font-weight:bold;color:#8d9cbb">?</div>
</body>
</html>
